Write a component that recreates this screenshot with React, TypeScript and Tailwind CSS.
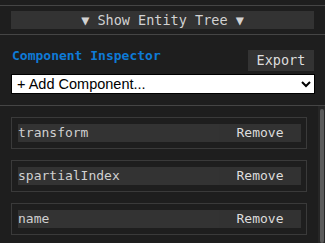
const components = ["transform", "spartialIndex", "name"];

const mono = { fontFamily: '"DejaVu Sans Mono", monospace' };

export default function App() {
  return (
    <div
      className="w-[325px] h-[243px] overflow-hidden bg-[#1e1e1e] text-[#cccccc] flex flex-col"
      style={mono}
    >
      <div className="pt-[5px]">
        <div className="h-px bg-[#454545]" />
        <div className="px-[11px] pt-[5px] pb-[5px]">
          <button className="w-full h-[18px] bg-[#333333] text-[#d2d2d2] text-[13.5px] leading-[18px] flex items-center justify-center">
            ▼ Show Entity Tree ▼
          </button>
        </div>
        <div className="h-px bg-[#454545]" />
      </div>

      <div className="px-[11px] pt-[15px]">
        <div className="flex items-start justify-between h-[21px]">
          <h2 className="text-[13px] font-bold text-[#0e7ad6] leading-[14px] -mt-[1px] pl-px">
            Component Inspector
          </h2>
          <button className="w-[66px] h-[21px] bg-[#333333] text-[#dddddd] text-[13.5px] leading-[21px] flex items-center justify-center">
            Export
          </button>
        </div>
        <select
          className="block mt-[3px] w-[304px] h-[20px] bg-white text-black border border-black text-[14.5px] leading-[18px] pl-[1px]"
          style={{ fontFamily: '"Liberation Sans", Arial, sans-serif' }}
          defaultValue=""
        >
          <option value="">+ Add Component...</option>
        </select>
      </div>

      <div className="mt-[11px] h-px bg-[#454545]" />

      <div className="flex flex-1 min-h-0">
        <div className="flex-1 pl-[11px] pt-[11px] flex flex-col gap-[11px]">
          {components.map((name) => (
            <div
              key={name}
              className="w-[296px] h-[32px] shrink-0 border border-[#3a3a3a] pl-[6px] pt-[6px]"
            >
              <div className="flex w-[283px] h-[18px]">
                <div className="flex-1 bg-[#333333] text-[#d0d0d0] text-[13px] leading-[18px] truncate">
                  {name}
                </div>
                <button className="w-[82px] bg-[#323232] text-[#dddddd] text-[13px] leading-[18px] text-center">
                  Remove
                </button>
              </div>
            </div>
          ))}
        </div>
        <div className="w-[7px] bg-[#262626] pt-[3px] pl-[2px]">
          <div className="w-[4px] h-full rounded-full bg-[#5a5a5a]" />
        </div>
      </div>
    </div>
  );
}
